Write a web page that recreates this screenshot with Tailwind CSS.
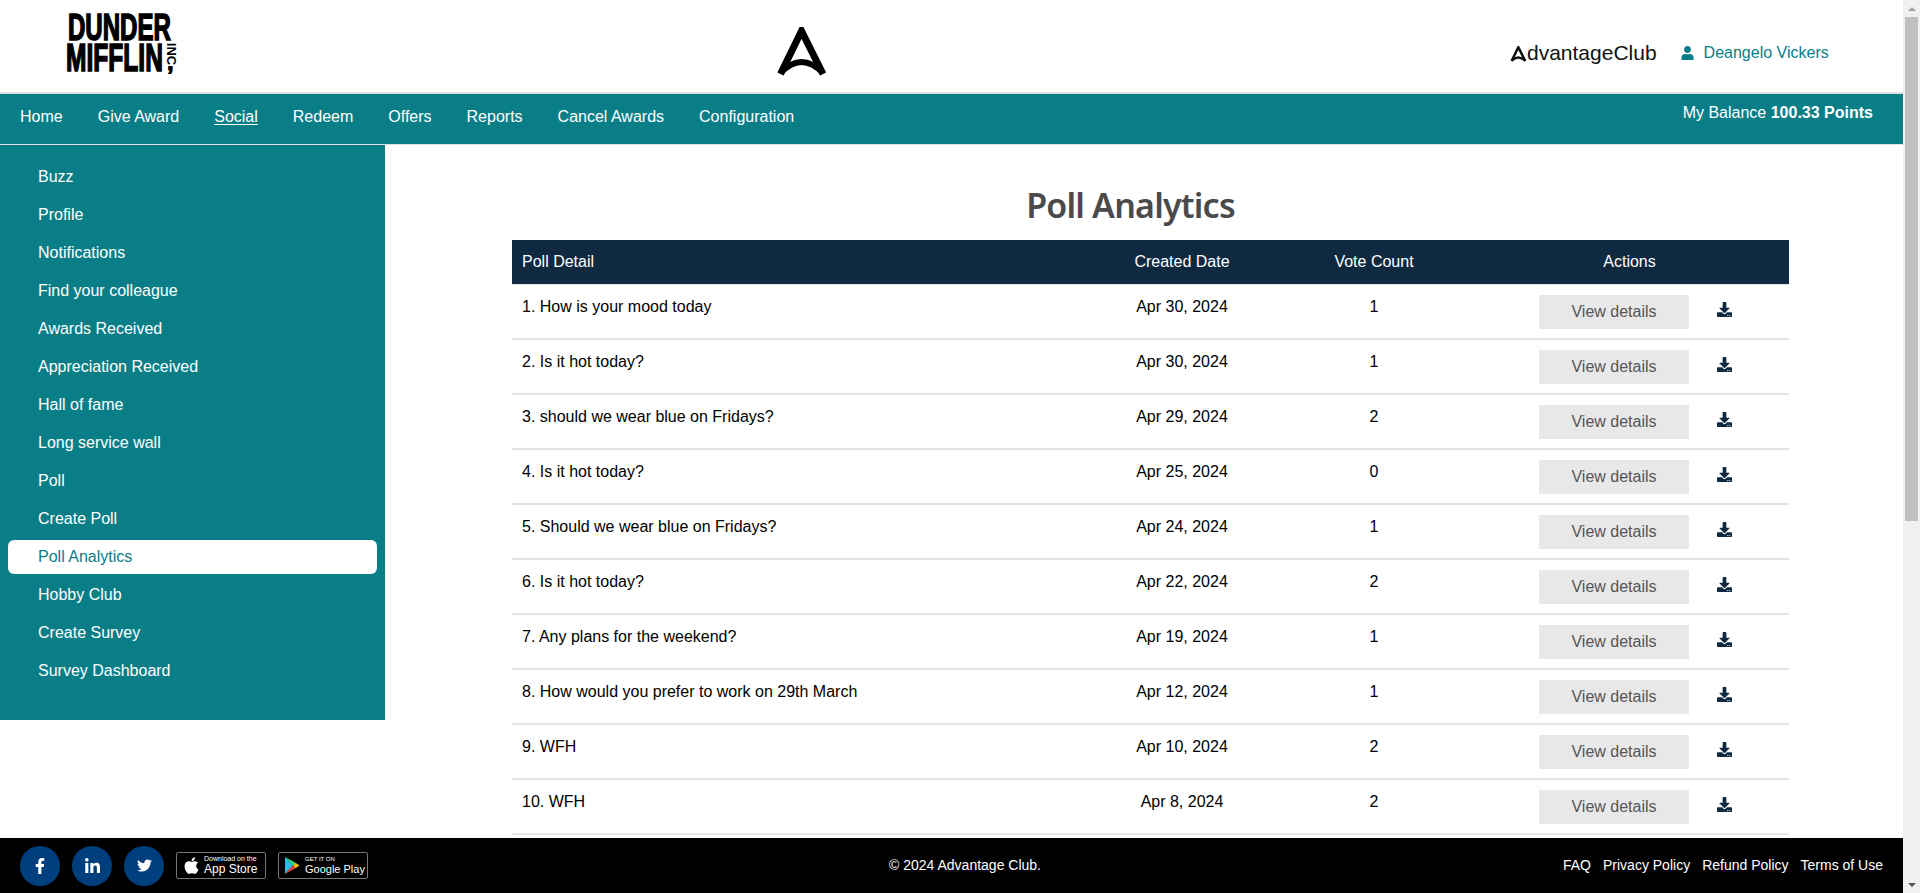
<!DOCTYPE html>
<html lang="en">
<head>
<meta charset="utf-8">
<title>Poll Analytics</title>
<script src="https://cdn.jsdelivr.net/npm/@tailwindcss/browser@4"></script>
</head>
<body class="m-0 overflow-hidden bg-white font-['Liberation_Sans',Arial,sans-serif] text-[16px] text-black">
<div class="flex h-[893px] w-[1920px] overflow-hidden">
  <div class="flex h-full w-[1903px] flex-col">
    <header class="flex h-[94px] shrink-0 items-center border-b-2 border-[#e0e0e0] bg-white">
      <div class="relative ml-[65px] h-[62px] w-[120px] font-['Liberation_Sans',sans-serif] font-bold uppercase text-black">
        <span class="absolute left-[3px] top-0 origin-left scale-x-[0.65] text-[37px] leading-[26px] [-webkit-text-stroke:1.6px_black]">Dunder</span>
        <span class="absolute left-[1px] top-[29px] origin-left scale-x-[0.63] text-[39px] leading-[28px] [-webkit-text-stroke:1.6px_black]">Mifflin</span>
        <span class="absolute left-[91px] top-[33px] flex h-[12px] w-[30px] rotate-90 items-center justify-center text-[13px] leading-[12px]">Inc</span>
        <span class="absolute left-[102px] top-[35px] text-[24px] leading-[24px] [-webkit-text-stroke:1px_black]">,</span>
      </div>
      <div class="ml-[592px] mt-[12px] flex w-[50px] justify-center">
        <svg class="h-[50px] w-[50px]" viewBox="0 0 50 50" fill="none" stroke="#000" stroke-width="7"><path d="M3.5 47 L24.5 4 L46 47" stroke-linejoin="miter"/><path d="M3.5 46 Q24.5 24 46 46" stroke-width="6"/></svg>
      </div>
      <div class="ml-[683px] mt-[14px] flex items-center text-[21px] text-[#111]">
        <svg class="mt-[1px] h-[16px] w-[17px]" viewBox="0 0 50 50" fill="none" stroke="#111" stroke-width="8"><path d="M3.5 47 L24.5 4 L46 47"/><path d="M3.5 46 Q24.5 26 46 46" stroke-width="7"/></svg>
        <span>dvantageClub</span>
      </div>
      <div class="ml-[24px] mt-[14px] flex items-center gap-[10px] text-[#0a7e87]">
        <svg class="h-[14px] w-[13px]" viewBox="0 0 448 512" fill="#0a7e87"><path d="M224 256c70.7 0 128-57.3 128-128S294.7 0 224 0 96 57.3 96 128s57.3 128 128 128zm89.6 32h-16.7c-22.2 10.2-46.9 16-72.9 16s-50.6-5.8-72.9-16h-16.7C60.2 288 0 348.2 0 422.4V464c0 26.5 21.5 48 48 48h352c26.5 0 48-21.5 48-48v-41.6c0-74.2-60.2-134.4-134.4-134.4z"/></svg>
        <span>Deangelo Vickers</span>
      </div>
    </header>
    <nav class="flex h-[51px] shrink-0 items-start justify-between border-b border-[#e3e3e3] bg-[#0a7e87] text-white">
      <div class="flex gap-[35px] pl-[20px] pt-[11px] leading-[24px]">
        <span>Home</span><span>Give Award</span><span class="underline underline-offset-2">Social</span><span>Redeem</span><span>Offers</span><span>Reports</span><span>Cancel Awards</span><span>Configuration</span>
      </div>
      <div class="pr-[30px] pt-[7px] leading-[24px]">My Balance <b>100.33 Points</b></div>
    </nav>
    <div class="flex min-h-0 flex-1 overflow-hidden">
      <aside class="h-[575px] w-[385px] shrink-0 bg-[#0a7e87] px-[8px] pt-[15px] text-white">
        <ul class="flex flex-col gap-[4px] leading-[34px]">
          <li class="h-[34px] pl-[30px]">Buzz</li>
          <li class="h-[34px] pl-[30px]">Profile</li>
          <li class="h-[34px] pl-[30px]">Notifications</li>
          <li class="h-[34px] pl-[30px]">Find your colleague</li>
          <li class="h-[34px] pl-[30px]">Awards Received</li>
          <li class="h-[34px] pl-[30px]">Appreciation Received</li>
          <li class="h-[34px] pl-[30px]">Hall of fame</li>
          <li class="h-[34px] pl-[30px]">Long service wall</li>
          <li class="h-[34px] pl-[30px]">Poll</li>
          <li class="h-[34px] pl-[30px]">Create Poll</li>
          <li class="h-[34px] rounded-[6px] bg-white pl-[30px] text-[#0a7e87]">Poll Analytics</li>
          <li class="h-[34px] pl-[30px]">Hobby Club</li>
          <li class="h-[34px] pl-[30px]">Create Survey</li>
          <li class="h-[34px] pl-[30px]">Survey Dashboard</li>
        </ul>
      </aside>
      <main class="ml-[127px] w-[1277px] shrink-0">
        <h1 class="h-[95px] pr-[40px] pt-[38px] text-center font-['Noto_Sans',sans-serif] text-[34px] font-semibold leading-[44px] tracking-[-0.8px] text-[#4a4a4a]">Poll Analytics</h1>
        <div class="grid h-[45px] grid-cols-[578px_184px_200px_315px] items-center border-b border-[#e4e4e4] bg-[#0f2a40] text-white">
          <div class="pl-[10px]">Poll Detail</div><div class="text-center">Created Date</div><div class="text-center">Vote Count</div><div class="pr-[4px] text-center">Actions</div>
        </div>
        <div class="grid h-[55px] grid-cols-[578px_184px_200px_315px] border-b-2 border-[#e4e4e4] pt-[10px] leading-[24px]">
          <div class="pl-[10px]">1. How is your mood today</div><div class="text-center">Apr 30, 2024</div><div class="text-center">1</div>
          <div class="flex items-start pl-[65px]"><span class="h-[34px] w-[150px] bg-[#e8e8e8] text-center leading-[34px] text-[#555]">View details</span><svg class="ml-[28px] mt-[7px] h-[15px] w-[15px]" viewBox="0 0 512 512" fill="#0f2a40"><path d="M216 0h80c13.3 0 24 10.7 24 24v168h87.7c17.8 0 26.7 21.5 14.1 34.1L269.7 378.3c-7.5 7.5-19.8 7.5-27.3 0L90.1 226.1c-12.6-12.6-3.7-34.1 14.1-34.1H192V24c0-13.3 10.7-24 24-24zm296 376v112c0 13.3-10.7 24-24 24H24c-13.3 0-24-10.7-24-24V376c0-13.3 10.7-24 24-24h146.7l49 49c20.1 20.1 52.5 20.1 72.6 0l49-49H488c13.3 0 24 10.7 24 24zm-124 88c0-11-9-20-20-20s-20 9-20 20 9 20 20 20 20-9 20-20zm64 0c0-11-9-20-20-20s-20 9-20 20 9 20 20 20 20-9 20-20z"/></svg></div>
        </div>
        <div class="grid h-[55px] grid-cols-[578px_184px_200px_315px] border-b-2 border-[#e4e4e4] pt-[10px] leading-[24px]">
          <div class="pl-[10px]">2. Is it hot today?</div><div class="text-center">Apr 30, 2024</div><div class="text-center">1</div>
          <div class="flex items-start pl-[65px]"><span class="h-[34px] w-[150px] bg-[#e8e8e8] text-center leading-[34px] text-[#555]">View details</span><svg class="ml-[28px] mt-[7px] h-[15px] w-[15px]" viewBox="0 0 512 512" fill="#0f2a40"><path d="M216 0h80c13.3 0 24 10.7 24 24v168h87.7c17.8 0 26.7 21.5 14.1 34.1L269.7 378.3c-7.5 7.5-19.8 7.5-27.3 0L90.1 226.1c-12.6-12.6-3.7-34.1 14.1-34.1H192V24c0-13.3 10.7-24 24-24zm296 376v112c0 13.3-10.7 24-24 24H24c-13.3 0-24-10.7-24-24V376c0-13.3 10.7-24 24-24h146.7l49 49c20.1 20.1 52.5 20.1 72.6 0l49-49H488c13.3 0 24 10.7 24 24zm-124 88c0-11-9-20-20-20s-20 9-20 20 9 20 20 20 20-9 20-20zm64 0c0-11-9-20-20-20s-20 9-20 20 9 20 20 20 20-9 20-20z"/></svg></div>
        </div>
        <div class="grid h-[55px] grid-cols-[578px_184px_200px_315px] border-b-2 border-[#e4e4e4] pt-[10px] leading-[24px]">
          <div class="pl-[10px]">3. should we wear blue on Fridays?</div><div class="text-center">Apr 29, 2024</div><div class="text-center">2</div>
          <div class="flex items-start pl-[65px]"><span class="h-[34px] w-[150px] bg-[#e8e8e8] text-center leading-[34px] text-[#555]">View details</span><svg class="ml-[28px] mt-[7px] h-[15px] w-[15px]" viewBox="0 0 512 512" fill="#0f2a40"><path d="M216 0h80c13.3 0 24 10.7 24 24v168h87.7c17.8 0 26.7 21.5 14.1 34.1L269.7 378.3c-7.5 7.5-19.8 7.5-27.3 0L90.1 226.1c-12.6-12.6-3.7-34.1 14.1-34.1H192V24c0-13.3 10.7-24 24-24zm296 376v112c0 13.3-10.7 24-24 24H24c-13.3 0-24-10.7-24-24V376c0-13.3 10.7-24 24-24h146.7l49 49c20.1 20.1 52.5 20.1 72.6 0l49-49H488c13.3 0 24 10.7 24 24zm-124 88c0-11-9-20-20-20s-20 9-20 20 9 20 20 20 20-9 20-20zm64 0c0-11-9-20-20-20s-20 9-20 20 9 20 20 20 20-9 20-20z"/></svg></div>
        </div>
        <div class="grid h-[55px] grid-cols-[578px_184px_200px_315px] border-b-2 border-[#e4e4e4] pt-[10px] leading-[24px]">
          <div class="pl-[10px]">4. Is it hot today?</div><div class="text-center">Apr 25, 2024</div><div class="text-center">0</div>
          <div class="flex items-start pl-[65px]"><span class="h-[34px] w-[150px] bg-[#e8e8e8] text-center leading-[34px] text-[#555]">View details</span><svg class="ml-[28px] mt-[7px] h-[15px] w-[15px]" viewBox="0 0 512 512" fill="#0f2a40"><path d="M216 0h80c13.3 0 24 10.7 24 24v168h87.7c17.8 0 26.7 21.5 14.1 34.1L269.7 378.3c-7.5 7.5-19.8 7.5-27.3 0L90.1 226.1c-12.6-12.6-3.7-34.1 14.1-34.1H192V24c0-13.3 10.7-24 24-24zm296 376v112c0 13.3-10.7 24-24 24H24c-13.3 0-24-10.7-24-24V376c0-13.3 10.7-24 24-24h146.7l49 49c20.1 20.1 52.5 20.1 72.6 0l49-49H488c13.3 0 24 10.7 24 24zm-124 88c0-11-9-20-20-20s-20 9-20 20 9 20 20 20 20-9 20-20zm64 0c0-11-9-20-20-20s-20 9-20 20 9 20 20 20 20-9 20-20z"/></svg></div>
        </div>
        <div class="grid h-[55px] grid-cols-[578px_184px_200px_315px] border-b-2 border-[#e4e4e4] pt-[10px] leading-[24px]">
          <div class="pl-[10px]">5. Should we wear blue on Fridays?</div><div class="text-center">Apr 24, 2024</div><div class="text-center">1</div>
          <div class="flex items-start pl-[65px]"><span class="h-[34px] w-[150px] bg-[#e8e8e8] text-center leading-[34px] text-[#555]">View details</span><svg class="ml-[28px] mt-[7px] h-[15px] w-[15px]" viewBox="0 0 512 512" fill="#0f2a40"><path d="M216 0h80c13.3 0 24 10.7 24 24v168h87.7c17.8 0 26.7 21.5 14.1 34.1L269.7 378.3c-7.5 7.5-19.8 7.5-27.3 0L90.1 226.1c-12.6-12.6-3.7-34.1 14.1-34.1H192V24c0-13.3 10.7-24 24-24zm296 376v112c0 13.3-10.7 24-24 24H24c-13.3 0-24-10.7-24-24V376c0-13.3 10.7-24 24-24h146.7l49 49c20.1 20.1 52.5 20.1 72.6 0l49-49H488c13.3 0 24 10.7 24 24zm-124 88c0-11-9-20-20-20s-20 9-20 20 9 20 20 20 20-9 20-20zm64 0c0-11-9-20-20-20s-20 9-20 20 9 20 20 20 20-9 20-20z"/></svg></div>
        </div>
        <div class="grid h-[55px] grid-cols-[578px_184px_200px_315px] border-b-2 border-[#e4e4e4] pt-[10px] leading-[24px]">
          <div class="pl-[10px]">6. Is it hot today?</div><div class="text-center">Apr 22, 2024</div><div class="text-center">2</div>
          <div class="flex items-start pl-[65px]"><span class="h-[34px] w-[150px] bg-[#e8e8e8] text-center leading-[34px] text-[#555]">View details</span><svg class="ml-[28px] mt-[7px] h-[15px] w-[15px]" viewBox="0 0 512 512" fill="#0f2a40"><path d="M216 0h80c13.3 0 24 10.7 24 24v168h87.7c17.8 0 26.7 21.5 14.1 34.1L269.7 378.3c-7.5 7.5-19.8 7.5-27.3 0L90.1 226.1c-12.6-12.6-3.7-34.1 14.1-34.1H192V24c0-13.3 10.7-24 24-24zm296 376v112c0 13.3-10.7 24-24 24H24c-13.3 0-24-10.7-24-24V376c0-13.3 10.7-24 24-24h146.7l49 49c20.1 20.1 52.5 20.1 72.6 0l49-49H488c13.3 0 24 10.7 24 24zm-124 88c0-11-9-20-20-20s-20 9-20 20 9 20 20 20 20-9 20-20zm64 0c0-11-9-20-20-20s-20 9-20 20 9 20 20 20 20-9 20-20z"/></svg></div>
        </div>
        <div class="grid h-[55px] grid-cols-[578px_184px_200px_315px] border-b-2 border-[#e4e4e4] pt-[10px] leading-[24px]">
          <div class="pl-[10px]">7. Any plans for the weekend?</div><div class="text-center">Apr 19, 2024</div><div class="text-center">1</div>
          <div class="flex items-start pl-[65px]"><span class="h-[34px] w-[150px] bg-[#e8e8e8] text-center leading-[34px] text-[#555]">View details</span><svg class="ml-[28px] mt-[7px] h-[15px] w-[15px]" viewBox="0 0 512 512" fill="#0f2a40"><path d="M216 0h80c13.3 0 24 10.7 24 24v168h87.7c17.8 0 26.7 21.5 14.1 34.1L269.7 378.3c-7.5 7.5-19.8 7.5-27.3 0L90.1 226.1c-12.6-12.6-3.7-34.1 14.1-34.1H192V24c0-13.3 10.7-24 24-24zm296 376v112c0 13.3-10.7 24-24 24H24c-13.3 0-24-10.7-24-24V376c0-13.3 10.7-24 24-24h146.7l49 49c20.1 20.1 52.5 20.1 72.6 0l49-49H488c13.3 0 24 10.7 24 24zm-124 88c0-11-9-20-20-20s-20 9-20 20 9 20 20 20 20-9 20-20zm64 0c0-11-9-20-20-20s-20 9-20 20 9 20 20 20 20-9 20-20z"/></svg></div>
        </div>
        <div class="grid h-[55px] grid-cols-[578px_184px_200px_315px] border-b-2 border-[#e4e4e4] pt-[10px] leading-[24px]">
          <div class="pl-[10px]">8. How would you prefer to work on 29th March</div><div class="text-center">Apr 12, 2024</div><div class="text-center">1</div>
          <div class="flex items-start pl-[65px]"><span class="h-[34px] w-[150px] bg-[#e8e8e8] text-center leading-[34px] text-[#555]">View details</span><svg class="ml-[28px] mt-[7px] h-[15px] w-[15px]" viewBox="0 0 512 512" fill="#0f2a40"><path d="M216 0h80c13.3 0 24 10.7 24 24v168h87.7c17.8 0 26.7 21.5 14.1 34.1L269.7 378.3c-7.5 7.5-19.8 7.5-27.3 0L90.1 226.1c-12.6-12.6-3.7-34.1 14.1-34.1H192V24c0-13.3 10.7-24 24-24zm296 376v112c0 13.3-10.7 24-24 24H24c-13.3 0-24-10.7-24-24V376c0-13.3 10.7-24 24-24h146.7l49 49c20.1 20.1 52.5 20.1 72.6 0l49-49H488c13.3 0 24 10.7 24 24zm-124 88c0-11-9-20-20-20s-20 9-20 20 9 20 20 20 20-9 20-20zm64 0c0-11-9-20-20-20s-20 9-20 20 9 20 20 20 20-9 20-20z"/></svg></div>
        </div>
        <div class="grid h-[55px] grid-cols-[578px_184px_200px_315px] border-b-2 border-[#e4e4e4] pt-[10px] leading-[24px]">
          <div class="pl-[10px]">9. WFH</div><div class="text-center">Apr 10, 2024</div><div class="text-center">2</div>
          <div class="flex items-start pl-[65px]"><span class="h-[34px] w-[150px] bg-[#e8e8e8] text-center leading-[34px] text-[#555]">View details</span><svg class="ml-[28px] mt-[7px] h-[15px] w-[15px]" viewBox="0 0 512 512" fill="#0f2a40"><path d="M216 0h80c13.3 0 24 10.7 24 24v168h87.7c17.8 0 26.7 21.5 14.1 34.1L269.7 378.3c-7.5 7.5-19.8 7.5-27.3 0L90.1 226.1c-12.6-12.6-3.7-34.1 14.1-34.1H192V24c0-13.3 10.7-24 24-24zm296 376v112c0 13.3-10.7 24-24 24H24c-13.3 0-24-10.7-24-24V376c0-13.3 10.7-24 24-24h146.7l49 49c20.1 20.1 52.5 20.1 72.6 0l49-49H488c13.3 0 24 10.7 24 24zm-124 88c0-11-9-20-20-20s-20 9-20 20 9 20 20 20 20-9 20-20zm64 0c0-11-9-20-20-20s-20 9-20 20 9 20 20 20 20-9 20-20z"/></svg></div>
        </div>
        <div class="grid h-[55px] grid-cols-[578px_184px_200px_315px] border-b-2 border-[#e4e4e4] pt-[10px] leading-[24px]">
          <div class="pl-[10px]">10. WFH</div><div class="text-center">Apr 8, 2024</div><div class="text-center">2</div>
          <div class="flex items-start pl-[65px]"><span class="h-[34px] w-[150px] bg-[#e8e8e8] text-center leading-[34px] text-[#555]">View details</span><svg class="ml-[28px] mt-[7px] h-[15px] w-[15px]" viewBox="0 0 512 512" fill="#0f2a40"><path d="M216 0h80c13.3 0 24 10.7 24 24v168h87.7c17.8 0 26.7 21.5 14.1 34.1L269.7 378.3c-7.5 7.5-19.8 7.5-27.3 0L90.1 226.1c-12.6-12.6-3.7-34.1 14.1-34.1H192V24c0-13.3 10.7-24 24-24zm296 376v112c0 13.3-10.7 24-24 24H24c-13.3 0-24-10.7-24-24V376c0-13.3 10.7-24 24-24h146.7l49 49c20.1 20.1 52.5 20.1 72.6 0l49-49H488c13.3 0 24 10.7 24 24zm-124 88c0-11-9-20-20-20s-20 9-20 20 9 20 20 20 20-9 20-20zm64 0c0-11-9-20-20-20s-20 9-20 20 9 20 20 20 20-9 20-20z"/></svg></div>
        </div>
      </main>
    </div>
    <footer class="flex h-[55px] shrink-0 items-center bg-black pl-[20px] pr-[20px] text-[14px] text-white">
      <div class="flex w-[869px] shrink-0 items-center">
        <span class="flex h-[40px] w-[40px] items-center justify-center rounded-full bg-[#003f7d]"><svg class="h-[16px] w-[10px]" viewBox="0 0 320 512" fill="#fff"><path d="M279.14 288l14.22-92.66h-88.91v-60.13c0-25.35 12.42-50.06 52.24-50.06h40.42V6.26S260.43 0 225.36 0c-73.22 0-121.08 44.38-121.08 124.72v70.62H22.89V288h81.39v224h100.17V288z"/></svg></span>
        <span class="ml-[12px] flex h-[40px] w-[40px] items-center justify-center rounded-full bg-[#003f7d]"><svg class="h-[15px] w-[15px]" viewBox="0 0 448 448" fill="#fff"><path d="M100.28 448H7.4V148.9h92.88zM53.79 108.1C24.09 108.1 0 83.5 0 53.8a53.79 53.79 0 0 1 107.58 0c0 29.7-24.1 54.3-53.79 54.3zM447.9 448h-92.68V302.4c0-34.7-.7-79.2-48.29-79.2-48.29 0-55.69 37.7-55.69 76.7V448h-92.78V148.9h89.08v40.8h1.3c12.4-23.5 42.69-48.3 87.88-48.3 94 0 111.28 61.9 111.28 142.3V448z"/></svg></span>
        <span class="ml-[12px] flex h-[40px] w-[40px] items-center justify-center rounded-full bg-[#003f7d]"><svg class="h-[15px] w-[15px]" viewBox="0 0 512 512" fill="#fff"><path d="M459.37 151.716c.325 4.548.325 9.097.325 13.645 0 138.72-105.583 298.558-298.558 298.558-59.452 0-114.68-17.219-161.137-47.106 8.447.974 16.568 1.299 25.34 1.299 49.055 0 94.213-16.568 130.274-44.832-46.132-.975-84.792-31.188-98.112-72.772 6.498.974 12.995 1.624 19.818 1.624 9.421 0 18.843-1.3 27.614-3.573-48.081-9.747-84.143-51.98-84.143-102.985v-1.299c13.969 7.797 30.214 12.67 47.431 13.319-28.264-18.843-46.781-51.005-46.781-87.391 0-19.492 5.197-37.36 14.294-52.954 51.655 63.675 129.3 105.258 216.365 109.807-1.624-7.797-2.599-15.918-2.599-24.04 0-57.828 46.782-104.934 104.934-104.934 30.213 0 57.502 12.67 76.67 33.137 23.715-4.548 46.456-13.32 66.599-25.34-7.798 24.366-24.366 44.833-46.132 57.827 21.117-2.273 41.584-8.122 60.426-16.243-14.292 20.791-32.161 39.308-52.628 54.253z"/></svg></span>
        <span class="ml-[12px] flex h-[27px] w-[90px] items-center rounded-[2px] border border-[#777] pl-[7px]">
          <svg class="h-[19px] w-[15px] shrink-0" viewBox="0 0 384 512" fill="#fff"><path d="M318.7 268.7c-.2-36.7 16.4-64.4 50-84.8-18.8-26.9-47.2-41.7-84.7-44.6-35.5-2.8-74.3 20.7-88.5 20.7-15 0-49.4-19.7-76.4-19.7C63.3 141.2 4 184.8 4 273.5q0 39.3 14.4 81.2c12.8 36.7 59 126.7 107.2 125.2 25.2-.6 43-17.9 75.8-17.9 31.8 0 48.3 17.9 76.4 17.9 48.6-.7 90.4-82.5 102.6-119.3-65.2-30.7-61.7-90-61.7-91.9zm-56.6-164.2c27.3-32.4 24.8-61.9 24-72.5-24.1 1.4-52 16.4-67.9 34.9-17.5 19.8-27.8 44.3-25.6 71.9 26.1 2 49.9-11.4 69.5-34.3z"/></svg>
          <span class="ml-[5px] flex flex-col whitespace-nowrap"><span class="text-[7px] leading-[8px]">Download on the</span><span class="text-[12px] leading-[13px]">App Store</span></span>
        </span>
        <span class="ml-[12px] flex h-[27px] w-[90px] items-center rounded-[2px] border border-[#777] pl-[5px]">
          <svg class="h-[19px] w-[16px] shrink-0" viewBox="0 0 16 18"><path d="M1 0.5 L9 9 L1 17.5 Z" fill="#32b7ea"/><path d="M1 0.5 L11.5 6.3 L9 9 Z" fill="#3ddc84"/><path d="M1 17.5 L11.5 11.7 L9 9 Z" fill="#ea4335"/><path d="M11.5 6.3 L15.5 9 L11.5 11.7 L9 9 Z" fill="#fbbc04"/></svg>
          <span class="ml-[5px] flex flex-col whitespace-nowrap"><span class="text-[6px] leading-[7px]">GET IT ON</span><span class="text-[11px] leading-[13px]">Google Play</span></span>
        </span>
      </div>
      <div class="whitespace-nowrap">© 2024 Advantage Club.</div>
      <div class="ml-auto flex gap-[12px]"><span>FAQ</span><span>Privacy Policy</span><span>Refund Policy</span><span>Terms of Use</span></div>
    </footer>
  </div>
  <div class="flex h-full w-[17px] shrink-0 flex-col items-center bg-[#f0f0f0]">
    <div class="flex h-[17px] w-full items-center justify-center"><span class="h-0 w-0 border-x-[4px] border-b-[4px] border-x-transparent border-b-[#a3a3a3]"></span></div>
    <div class="h-[504px] w-[13px] bg-[#c1c1c1]"></div>
    <div class="mt-auto flex h-[17px] w-full items-center justify-center"><span class="h-0 w-0 border-x-[4px] border-t-[4px] border-x-transparent border-t-[#505050]"></span></div>
  </div>
</div>
</body>
</html>
